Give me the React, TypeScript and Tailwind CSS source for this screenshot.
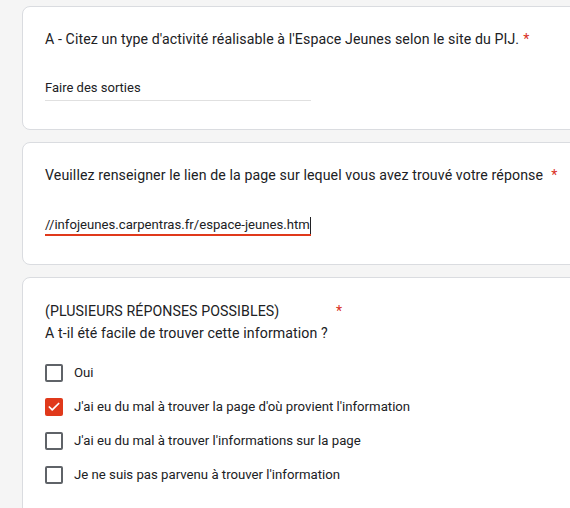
import { Check } from "lucide-react";

const options = [
  { label: "Oui", checked: false },
  { label: "J'ai eu du mal à trouver la page d'où provient l'information", checked: true },
  { label: "J'ai eu du mal à trouver l'informations sur la page", checked: false },
  { label: "Je ne suis pas parvenu à trouver l'information", checked: false },
];

function Card({ children, className = "" }: { children: React.ReactNode; className?: string }) {
  return (
    <div className={`bg-white border border-[#dadce0] rounded-lg w-[600px] shrink-0 pl-[22px] pr-6 ${className}`}>
      {children}
    </div>
  );
}

export default function App() {
  return (
    <div className="h-[508px] bg-[#f5f5f5] pl-[22px] pt-[6px] flex flex-col gap-3 overflow-hidden font-['Roboto',sans-serif] text-[#202124]">
      <Card className="h-[124px] pt-[20px]">
        <div className="text-[14.16px] leading-6 tracking-[0.1px] whitespace-nowrap">
          A - Citez un type d'activité réalisable à l'Espace Jeunes selon le site du PIJ.
          <span className="text-[#d93025] ml-[4px]">*</span>
        </div>
        <div className="mt-[27px] w-[266px] border-b border-[#e0e0e0] pb-[2px] text-[13px] leading-5">
          Faire des sorties
        </div>
      </Card>

      <Card className="h-[123px] pt-[20px]">
        <div className="text-[14.16px] leading-6 tracking-[0.1px] whitespace-nowrap">
          Veuillez renseigner le lien de la page sur lequel vous avez trouvé votre réponse
          <span className="text-[#d93025] ml-[8px]">*</span>
        </div>
        <div className="mt-[29px] w-[266px] border-b-2 border-[#e0391b] text-[13.15px] leading-[18px] flex items-center whitespace-nowrap">
          <span className="shrink-0">//infojeunes.carpentras.fr/espace-jeunes.htm</span>
          <span className="shrink-0 block w-px h-[17px] bg-[#202124]" />
        </div>
      </Card>

      <Card className="h-[260px] pt-[22px]">
        <div className="text-[14.16px] leading-[22px] tracking-[0.1px]">
          <div className="flex">
            <span className="inline-block w-[291px]">(PLUSIEURS RÉPONSES POSSIBLES)</span>
            <span className="text-[#d93025]">*</span>
          </div>
          <div>A t-il été facile de trouver cette information ?</div>
        </div>
        <div className="mt-[20px] flex flex-col gap-[16px]">
          {options.map((o) => (
            <div key={o.label} className="flex items-center gap-[11px] h-[18px]">
              {o.checked ? (
                <span className="w-[18px] h-[18px] rounded-[2px] bg-[#e0391b] flex items-center justify-center">
                  <Check className="w-[14px] h-[14px] text-white" strokeWidth={3} />
                </span>
              ) : (
                <span className="w-[18px] h-[18px] rounded-[2px] border-2 border-[#5f6368]" />
              )}
              <span className="text-[13.2px] leading-5">{o.label}</span>
            </div>
          ))}
        </div>
      </Card>
    </div>
  );
}
